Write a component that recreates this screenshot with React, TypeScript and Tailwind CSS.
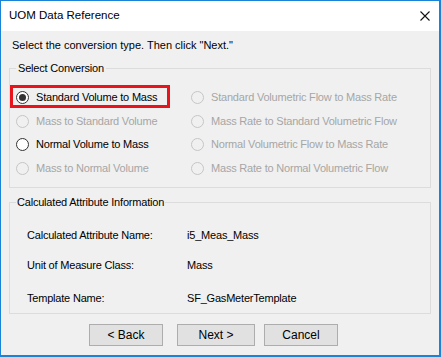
import React from 'react';

type Option = { label: string; checked?: boolean; disabled?: boolean };

// row-wise: left column, right column
const options: Option[] = [
  { label: 'Standard Volume to Mass', checked: true },
  { label: 'Standard Volumetric Flow to Mass Rate', disabled: true },
  { label: 'Mass to Standard Volume', disabled: true },
  { label: 'Mass Rate to Standard Volumetric Flow', disabled: true },
  { label: 'Normal Volume to Mass' },
  { label: 'Normal Volumetric Flow to Mass Rate', disabled: true },
  { label: 'Mass to Normal Volume', disabled: true },
  { label: 'Mass Rate to Normal Volumetric Flow', disabled: true },
];

const info = [
  { label: 'Calculated Attribute Name:', value: 'i5_Meas_Mass', mt: 'mt-[20px]' },
  { label: 'Unit of Measure Class:', value: 'Mass', mt: 'mt-[17px]' },
  { label: 'Template Name:', value: 'SF_GasMeterTemplate', mt: 'mt-[20px]' },
];

function Radio({ checked, disabled }: { checked?: boolean; disabled?: boolean }) {
  return (
    <span
      className={`flex h-[13px] w-[13px] shrink-0 items-center justify-center rounded-full border ${
        disabled ? 'border-[#c6c6c6] bg-[#f0f0f0]' : 'border-[#333333] bg-white'
      }`}
    >
      {checked && <span className="h-[7px] w-[7px] rounded-full bg-[#333333]" />}
    </span>
  );
}

function Button({ label, className = '' }: { label: string; className?: string }) {
  return (
    <button
      type="button"
      className={`flex h-[22px] items-center justify-center border border-[#adadad] bg-[#e1e1e1] text-[12px] text-black ${className}`}
    >
      {label}
    </button>
  );
}

export default function App() {
  return (
    <div className="flex h-[357px] w-[441px] flex-col border-t border-l border-r-2 border-b-2 border-[#1883d7] bg-[#f0f0f0] font-['Liberation_Sans',Arial,sans-serif] text-black">
      {/* Title bar */}
      <div className="flex h-[30px] shrink-0 items-center justify-between bg-white pl-[8px] pr-[9px]">
        <span className="text-[11.5px] leading-none">UOM Data Reference</span>
        <svg width="10" height="10" viewBox="0 0 10 10" className="block">
          <path d="M0.5 0.5 L9.5 9.5 M9.5 0.5 L0.5 9.5" stroke="#111" strokeWidth="1.1" fill="none" />
        </svg>
      </div>

      <div className="flex flex-col px-[8px]">
        <p className="mt-[8px] pl-[3px] text-[11px] leading-[13px]">
          Select the conversion type. Then click &quot;Next.&quot;
        </p>

        {/* Select Conversion */}
        <fieldset className="mt-[10px] border border-[#dcdcdc]">
          <legend className="ml-[6px] px-[2px] text-[11px] leading-[13px] tracking-[-0.2px]">Select Conversion</legend>
          <div className="grid grid-cols-[175px_1fr] pl-[6px] pt-[10.75px] pb-[7px]">
            {options.map((o, i) => (
              <div key={o.label} className="relative flex h-[23.5px] items-center gap-[7px]">
                {i === 0 && (
                  <span className="pointer-events-none absolute left-[-6px] top-[-1px] h-[23px] w-[160px] border-[3px] border-[#e8141c]" />
                )}
                <Radio checked={o.checked} disabled={o.disabled} />
                <span
                  className={`whitespace-nowrap text-[11px] leading-[13px] tracking-[-0.2px] ${
                    o.disabled ? 'text-[#a6a6a6]' : 'text-black'
                  }`}
                >
                  {o.label}
                </span>
              </div>
            ))}
          </div>
        </fieldset>

        {/* Calculated Attribute Information */}
        <fieldset className="mt-[8.5px] border border-[#dcdcdc]">
          <legend className="ml-[6px] px-[1px] text-[11px] leading-[13px] tracking-[-0.2px]">
            Calculated Attribute Information
          </legend>
          <div className="flex flex-col pl-[17px] pb-[7.5px]">
            {info.map(r => (
              <div key={r.label} className={`flex text-[11px] leading-[13px] tracking-[-0.2px] ${r.mt}`}>
                <span className="w-[160px]">{r.label}</span>
                <span>{r.value}</span>
              </div>
            ))}
          </div>
        </fieldset>

        {/* Buttons */}
        <div className="mt-[10px] flex pl-[80px]">
          <Button label="< Back" className="w-[74px]" />
          <Button label="Next >" className="ml-[14px] w-[78px]" />
          <Button label="Cancel" className="ml-[9px] w-[74px]" />
        </div>
      </div>
    </div>
  );
}
